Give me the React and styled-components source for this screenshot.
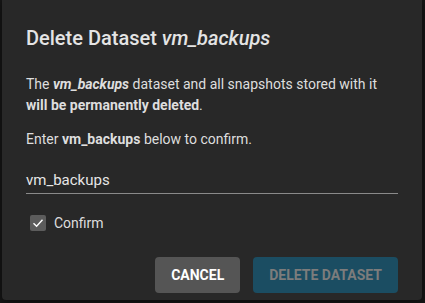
import React from "react";
import styled, { createGlobalStyle } from "styled-components";

const Global = createGlobalStyle`
  html, body { margin: 0; padding: 0; background: #161616; }
  body { font-family: Roboto, "Noto Sans", sans-serif; overflow: hidden; }
`;

const Backdrop = styled.div`
  width: 425px;
  height: 303px;
  box-sizing: border-box;
  padding: 0 3px 3px 2px;
  display: flex;
`;

const Dialog = styled.div`
  flex: 1;
  background: #282828;
  border-radius: 0 0 4px 4px;
  box-shadow: 0 2px 8px rgba(0, 0, 0, 0.5);
  padding: 22px 24px 0 24px;
  display: flex;
  flex-direction: column;
  color: #e2e2e2;
`;

const Title = styled.h2`
  margin: 0;
  font-size: 20px;
  font-weight: 500;
  line-height: 32px;
  color: #e4e4e4;
  em { font-style: italic; }
`;

const Para = styled.p`
  margin: ${(p) => p.$mt || 0}px 0 0 0;
  font-size: 14px;
  line-height: 21px;
  color: #dedede;
  b { font-weight: 700; }
`;

const Field = styled.div`
  margin-top: 16px;
  border-bottom: 1px solid #8a8a8a;
  padding: 4px 0 3px 0;
  font-size: 15px;
  line-height: 20px;
  color: #e6e6e6;
`;

const CheckRow = styled.label`
  margin-top: 21px;
  display: flex;
  align-items: center;
  gap: 8px;
  padding-left: 4px;
  font-size: 14px;
  color: #dedede;
`;

const Box = styled.span`
  width: 16px;
  height: 16px;
  border-radius: 2px;
  background: #5c5c5c;
  display: flex;
  align-items: center;
  justify-content: center;
`;

const Actions = styled.div`
  margin-top: 26px;
  display: flex;
  justify-content: flex-end;
  gap: 13px;
`;

const Button = styled.button`
  height: 36px;
  border: none;
  border-radius: 4px;
  padding: 0 16px;
  font-family: Roboto, "Noto Sans", sans-serif;
  font-size: 14px;
  font-weight: 700;
  text-transform: uppercase;
  background: ${(p) => (p.$primary ? "#1b4d62" : "#555555")};
  color: ${(p) => (p.$primary ? "#7c7c7c" : "#ffffff")};
  min-width: ${(p) => (p.$primary ? "144px" : "85px")};
`;

export default function App() {
  return (
    <>
      <Global />
      <Backdrop>
        <Dialog>
          <Title>
            Delete Dataset <em>vm_backups</em>
          </Title>
          <Para $mt={20}>
            The <b><i>vm_backups</i></b> dataset and all snapshots stored with it{" "}
            <b>will be permanently deleted</b>.
          </Para>
          <Para $mt={13}>
            Enter <b>vm_backups</b> below to confirm.
          </Para>
          <Field>vm_backups</Field>
          <CheckRow>
            <Box>
              <svg width="12" height="12" viewBox="0 0 12 12">
                <path d="M1.5 6.2 L4.6 9.2 L10.5 2.8" fill="none" stroke="#fff" strokeWidth="1.4" />
              </svg>
            </Box>
            Confirm
          </CheckRow>
          <Actions>
            <Button>Cancel</Button>
            <Button $primary disabled>Delete Dataset</Button>
          </Actions>
        </Dialog>
      </Backdrop>
    </>
  );
}
